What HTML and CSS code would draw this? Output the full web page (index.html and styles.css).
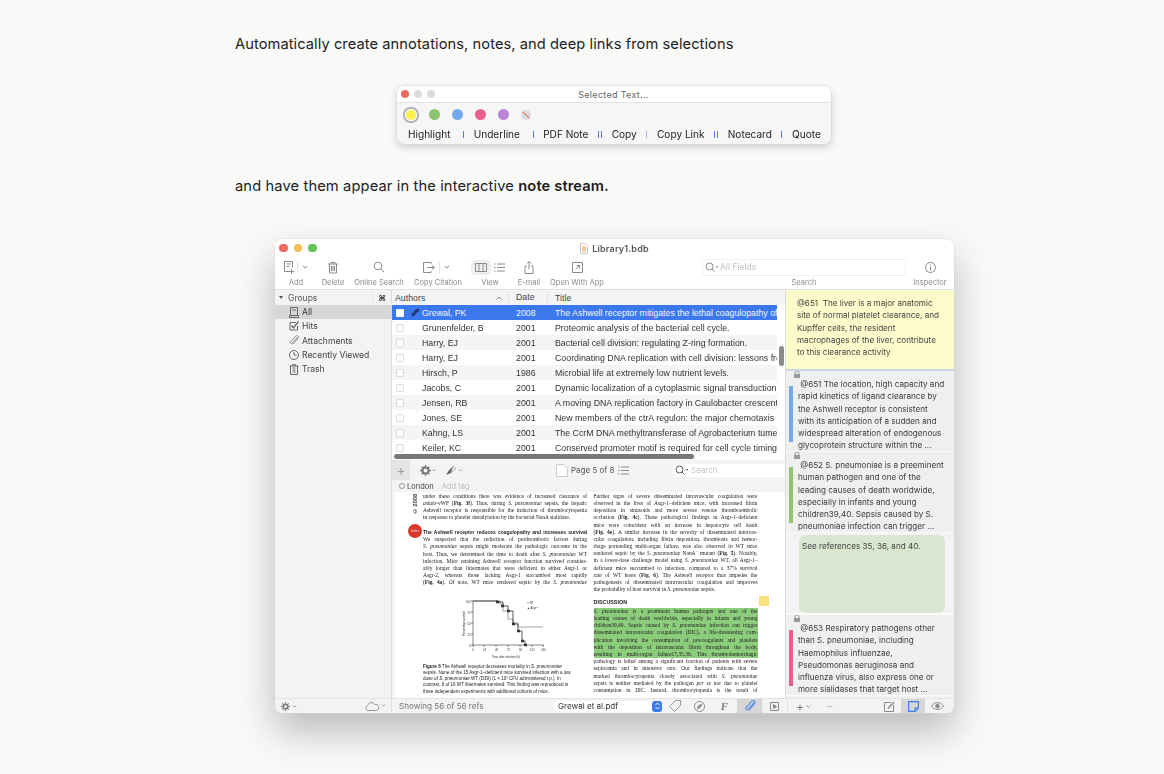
FILE: index.html
```html
<!DOCTYPE html>
<html lang="en">
<head>
<meta charset="utf-8">
<title>Bookends note stream</title>
<link rel="stylesheet" href="styles.css">
</head>
<body>
<main class="page">
  <p class="lead">Automatically create annotations, notes, and deep links from selections</p>

  <section class="popup">
    <header class="popup-title">
      <span class="lights"><i class="light red"></i><i class="light off"></i><i class="light off"></i></span>
      <span class="popup-name">Selected Text...</span>
    </header>
    <div class="swatches">
      <i class="swatch yellow"></i><i class="swatch green"></i><i class="swatch blue"></i><i class="swatch pink"></i><i class="swatch purple"></i>
      <svg class="swatch-none" width="10" height="10" viewBox="0 0 10 10"><circle cx="5" cy="5" r="5" fill="#dcdcdc"/><path d="M1.5 2 8.5 8" stroke="#e8553f" stroke-width="1"/></svg>
    </div>
    <div class="actions">
      <span>Highlight</span><b class="sep"></b><span>Underline</span><b class="sep"></b><span>PDF Note</span><b class="sep dbl"></b><span>Copy</span><b class="sep pale"></b><span>Copy Link</span><b class="sep dbl"></b><span>Notecard</span><b class="sep"></b><span>Quote</span>
    </div>
  </section>

  <p class="lead second">and have them appear in the interactive <strong>note stream.</strong></p>

  <section class="window">
    <header class="titlebar">
      <span class="lights big"><i class="light red"></i><i class="light amber"></i><i class="light lime"></i></span>
      <span class="doc-name">
        <svg width="8" height="11" viewBox="0 0 8 11"><path d="M.5.5h5l2 2v8H.5z" fill="#fff" stroke="#ccc"/><path d="M2 4h4M2 6h4M2 8h4" stroke="#ec9a3c"/></svg>
        Library1.bdb
      </span>
      <span></span>
    </header>

    <div class="toolbar">
      <div class="tool w42"><div class="ticon">
        <svg width="26" height="14" viewBox="0 0 26 14" fill="none"><path d="M1.500 1.500h8v6M1.500 1.500v10h5"/><path d="M3.500 4h4M3.500 6.500h3M8.500 9v5M6 11.500h5"/><path class="faint" d="M14.500 1v11"/><path d="m20 6 2 2 2-2"/></svg></div><span>Add</span></div>
      <div class="tool w32"><div class="ticon">
        <svg width="12" height="13" viewBox="0 0 12 13" fill="none"><path d="M1 3h10M4 3V1.500h4V3M2.500 3v9h7V3M4.500 5v5M6 5v5M7.500 5v5"/></svg></div><span>Delete</span></div>
      <div class="tool w60"><div class="ticon">
        <svg width="12" height="12" viewBox="0 0 12 12" fill="none"><circle cx="5" cy="5" r="3.800"/><path d="m8 8 3 3"/></svg></div><span>Online Search</span></div>
      <div class="tool w58"><div class="ticon">
        <svg width="32" height="13" viewBox="0 0 32 13" fill="none"><path d="M9 3V1.500H1.500v10H9V10M5 6.500h7M10 4.500l2.500 2-2.500 2"/><path class="faint" d="M17.500 1v11"/><path d="m23 5 2 2 2-2"/></svg></div><span>Copy Citation</span></div>
      <div class="tool w46"><div class="ticon view">
        <svg class="on" width="20" height="15" viewBox="0 0 20 15" fill="none"><path d="M4.500 3.500h11v8h-11zM8 3.500v8M12 3.500v8"/></svg>
        <svg width="11" height="9" viewBox="0 0 11 9" fill="none"><path d="M0 1h1.500M3 1h8M0 4.500h1.500M3 4.500h8M0 8h1.500M3 8h8"/></svg></div><span>View</span></div>
      <div class="tool w32"><div class="ticon">
        <svg width="10" height="13" viewBox="0 0 10 13" fill="none"><path d="M3 5H1v7.500h8V5H7M5 8.500V.5M3 2.500l2-2 2 2"/></svg></div><span>E-mail</span></div>
      <div class="tool w64"><div class="ticon">
        <svg width="11" height="11" viewBox="0 0 11 11" fill="none"><path d="M.5.5h10v10H.5zM3.500 7.500l4-4M4.500 3.500h3v3"/></svg></div><span>Open With App</span></div>
      <div class="tool search-tool"><div class="ticon"><div class="allfields">
        <svg width="14" height="10" viewBox="0 0 14 10" fill="none"><circle cx="4.500" cy="4.500" r="3.500"/><path d="m7 7 2.500 2.500M10.500 4l1.300 1.300L13 4"/></svg>
        <span>All Fields</span></div></div><span>Search</span></div>
      <div class="tool w48"><div class="ticon">
        <svg width="11" height="11" viewBox="0 0 11 11" fill="none"><circle cx="5.500" cy="5.500" r="5"/><path d="M5.500 4.500v4M5.500 2.500v1"/></svg></div><span>Inspector</span></div>
    </div>

    <div class="panes">
      <aside class="sidebar">
        <div class="group-head"><span class="disc"></span><span class="group-name">Groups</span><span class="cmd">⌘</span></div>
        <ul class="groups">
          <li class="active"><svg width="10" height="11" viewBox="0 0 10 11" fill="none" stroke="#666"><path d="M1.500.5h7v8h-7zM3 3h4M.5 8.500h9v2h-9z"/></svg>All</li>
          <li><svg width="10" height="10" viewBox="0 0 10 10" fill="none" stroke="#666"><path d="M8.500 5v4H1V1.500h6"/><path d="m2.500 4.500 2 2.500L9.500.5" stroke-width="1.300"/></svg>Hits</li>
          <li><svg width="10" height="11" viewBox="0 0 10 11" fill="none" stroke="#888"><path d="M8.500 2.500 3.200 8.300c-.9 1-2.500-.3-1.600-1.400L6.700 1.200c1.500-1.500 3.700.5 2.300 2.100L3.800 9.200"/></svg>Attachments</li>
          <li><svg width="10" height="10" viewBox="0 0 10 10" fill="none" stroke="#666"><circle cx="5" cy="5" r="4.500"/><path d="M5 2v3h2.500"/></svg>Recently Viewed</li>
          <li><svg width="10" height="11" viewBox="0 0 10 11" fill="none" stroke="#666"><path d="M.5 2h9M3.500 2V.7h3V2M1.500 2v8.500h7V2M3.500 4h3M3.500 6h3M3.500 8h3"/></svg>Trash</li>
        </ul>
      </aside>

      <section class="center">
        <div class="list">
          <div class="list-head">
            <span class="h-authors">Authors<svg width="6" height="4" viewBox="0 0 6 4" fill="none" stroke="#888"><path d="m.5 3.500L3 1l2.500 2.500"/></svg></span>
            <span class="h-date">Date</span>
            <span class="h-title">Title</span>
          </div>
          <div class="row selected"><i class="check"></i><svg class="clip" width="8" height="8" viewBox="0 0 10 10" fill="none" stroke="#16294f" stroke-width="1.500"><path d="M8.500 2 3.200 7.800c-.9 1-2.500-.3-1.600-1.400L6.700.8c1.500-1.500 3.700.5 2.300 2.100"/></svg><span>Grewal, PK</span><span>2008</span><span>The Ashwell receptor mitigates the lethal coagulopathy of sepsis</span></div>
          <div class="row"><i class="check"></i><span>Grunenfelder, B</span><span>2001</span><span>Proteomic analysis of the bacterial cell cycle.</span></div>
          <div class="row alt"><i class="check"></i><span>Harry, EJ</span><span>2001</span><span>Bacterial cell division: regulating Z-ring formation.</span></div>
          <div class="row"><i class="check"></i><span>Harry, EJ</span><span>2001</span><span>Coordinating DNA replication with cell division: lessons from</span></div>
          <div class="row alt"><i class="check"></i><span>Hirsch, P</span><span>1986</span><span>Microbial life at extremely low nutrient levels.</span></div>
          <div class="row"><i class="check"></i><span>Jacobs, C</span><span>2001</span><span>Dynamic localization of a cytoplasmic signal transduction response</span></div>
          <div class="row alt"><i class="check"></i><span>Jensen, RB</span><span>2001</span><span>A moving DNA replication factory in Caulobacter crescentus</span></div>
          <div class="row"><i class="check"></i><span>Jones, SE</span><span>2001</span><span>New members of the ctrA regulon: the major chemotaxis operon</span></div>
          <div class="row alt"><i class="check"></i><span>Kahng, LS</span><span>2001</span><span>The CcrM DNA methyltransferase of Agrobacterium tumefaciens</span></div>
          <div class="row"><i class="check"></i><span>Keiler, KC</span><span>2001</span><span>Conserved promoter motif is required for cell cycle timing</span></div>
          <i class="vscroll"></i>
          <i class="hscroll"></i>
        </div>

        <div class="pdf-bar">
          <span class="plus">+</span>
          <svg class="gear" width="17" height="11" viewBox="0 0 17 11" fill="none" stroke="#777"><circle cx="5.500" cy="5.500" r="3" stroke-width="2"/><path d="M5.500 0v2M5.500 9v2M0 5.500h2M9 5.500h2M1.700 1.700l1.400 1.400M7.900 7.900l1.400 1.400M1.700 9.300l1.400-1.400M7.900 3.100l1.400-1.400" stroke-width="1.300"/><path d="m12.500 4.500 1.500 1.500 1.500-1.500" stroke="#999"/></svg>
          <svg class="marker" width="19" height="11" viewBox="0 0 19 11" fill="none"><path d="m1 10 2.500-4L8 1l3 2.500L6 8z" fill="#666"/><path d="m8 1 3 2.500L6 8" stroke="#bbb" fill="#eee"/><path d="m14 4.500 1.500 1.500 1.500-1.500" stroke="#999"/></svg>
          <span class="page-num">
            <svg width="12" height="13" viewBox="0 0 12 13" fill="#fff" stroke="#ccc"><path d="M.5.5h7l4 4v8H.5z"/></svg>
            Page 5 of 8
            <svg width="11" height="9" viewBox="0 0 11 9" fill="none" stroke="#888"><path d="M0 1h1.500M3 1h8M0 4.500h1.500M3 4.500h8M0 8h1.500M3 8h8"/></svg>
          </span>
          <span class="pdf-search">
            <svg width="14" height="10" viewBox="0 0 14 10" fill="none" stroke="#555"><circle cx="4.500" cy="4.500" r="3.500"/><path d="m7 7 2.500 2.500M10.500 4l1.300 1.300L13 4"/></svg>
            Search
          </span>
        </div>
        <div class="tagbar"><i class="tag-dot"></i><span>London</span><span class="add-tag">Add tag</span></div>

        <div class="pdf">
          <span class="rail">© 2008 N</span>
          <span class="badge">letter</span>
          <i class="pin"></i>
          <div class="col left-col">
            <p class="ln">under these conditions there was evidence of increased clearance of</p>
            <p class="ln"><em>asialo</em>-vWF (<b>Fig. 3f</b>). Thus, during <em>S. pneumoniae</em> sepsis, the hepatic</p>
            <p class="ln">Ashwell receptor is responsible for the induction of thrombocytopenia</p>
            <p class="ln last">in response to platelet desialylation by the bacterial NanA sialidase.</p>
            <p class="ln heading">The Ashwell receptor reduces coagulopathy and increases survival</p>
            <p class="ln">We suspected that the reduction of prothrombotic factors during</p>
            <p class="ln"><em>S. pneumoniae</em> sepsis might moderate the pathologic outcome in the</p>
            <p class="ln">host. Thus, we determined the time to death after <em>S. pneumoniae</em> WT</p>
            <p class="ln">infection. Mice retaining Ashwell receptor function survived consider-</p>
            <p class="ln">ably longer than littermates that were deficient in either Asgr-1 or</p>
            <p class="ln">Asgr-2, whereas those lacking Asgr-1 succumbed most rapidly</p>
            <p class="ln">(<b>Fig. 4a</b>). Of note, WT mice rendered septic by the <em>S. pneumoniae</em></p>
            <svg class="chart" width="82" height="60" viewBox="0 0 82 60" fill="none" stroke="#333" stroke-width=".6">
              <path d="M9 1v44h71M7 1h2M7 12h2M7 23h2M7 34h2M7 45h2M9 45v2M20 45v2M32 45v2M44 45v2M56 45v2M68 45v2M79 45v2"/>
              <path d="M9 1h27v3h3v7h5v8h5v4h5v4h25" stroke="#666"/>
              <path d="M9 1h25v1h5v4h5v5h5v13h5v7h4v10h3v4" stroke-width=".8"/>
              <path d="M32 2h3M37 6h3M43 11h3M48 24h3M53 31h3M57 41h3M60 45h3" stroke-width="2.500"/>
              <g class="chart-t" stroke="none" fill="#333">
                <text x="63" y="3.500">□ WT</text>
                <text x="63" y="8.500">▲ Asgr⁻¹⁻</text>
                <text x="28" y="57.500">Time after infection (h)</text>
                <text x="8" y="51">0</text><text x="19" y="51">24</text><text x="31" y="51">48</text><text x="43" y="51">72</text><text x="55" y="51">96</text><text x="66" y="51">120</text><text x="77" y="51">240</text>
                <text x="2" y="2.500">100</text><text x="3.500" y="13.500">75</text><text x="3.500" y="24.500">50</text><text x="3.500" y="35.500">25</text><text x="5" y="46.500">0</text>
                <text transform="translate(1 36) rotate(-90)">Percentage survival</text>
              </g>
            </svg>
            <p class="cap"><b>Figure 6</b> The Ashwell receptor decreases mortality in <em>S. pneumoniae</em></p>
            <p class="cap">sepsis. None of the 15 Asgr-1–deficient mice survived infection with a low</p>
            <p class="cap">dose of <em>S. pneumoniae</em> WT (D39) (1 × 10³ CFU administered i.p.). In</p>
            <p class="cap">contrast, 6 of 16 WT littermates survived. This finding was reproduced in</p>
            <p class="cap">three independent experiments with additional cohorts of mice.</p>
          </div>
          <div class="col right-col">
            <p class="ln">Further signs of severe disseminated intravascular coagulation were</p>
            <p class="ln">observed in the liver of Asgr-1–deficient mice, with increased fibrin</p>
            <p class="ln">deposition in sinusoids and more severe venous thromboembolic</p>
            <p class="ln">occlusion (<b>Fig. 4c</b>). These pathological findings in Asgr-1–deficient</p>
            <p class="ln">mice were coincident with an increase in hepatocyte cell death</p>
            <p class="ln">(<b>Fig. 4e</b>). A similar increase in the severity of disseminated intravas-</p>
            <p class="ln">cular coagulation, including fibrin deposition, thrombosis and hemor-</p>
            <p class="ln">rhage portending multi-organ failure, was also observed in WT mice</p>
            <p class="ln">rendered septic by the <em>S. pneumoniae</em> NanA⁻ mutant (<b>Fig. 5</b>). Notably,</p>
            <p class="ln">in a lower-dose challenge model using <em>S. pneumoniae</em> WT, all Asgr-1–</p>
            <p class="ln">deficient mice succumbed to infection, compared to a 37% survival</p>
            <p class="ln">rate of WT hosts (<b>Fig. 6</b>). The Ashwell receptor thus impedes the</p>
            <p class="ln">pathogenesis of disseminated intravascular coagulation and improves</p>
            <p class="ln last">the probability of host survival in <em>S. pneumoniae</em> sepsis.</p>
            <p class="disc-head">DISCUSSION</p>
            <div class="hl">
              <p class="ln"><em>S. pneumoniae</em> is a prominent human pathogen and one of the</p>
              <p class="ln">leading causes of death worldwide, especially in infants and young</p>
              <p class="ln">children39,40. Sepsis caused by <em>S. pneumoniae</em> infection can trigger</p>
              <p class="ln">disseminated intravascular coagulation (DIC), a life-threatening com-</p>
              <p class="ln">plication involving the consumption of procoagulants and platelets</p>
              <p class="ln">with the deposition of intravascular fibrin throughout the body,</p>
              <p class="ln">resulting in multi-organ failure17,35,36. This thrombohemorrhagic</p>
            </div>
            <p class="ln">pathology is lethal among a significant fraction of patients with severe</p>
            <p class="ln">septicemia and in intensive care. Our findings indicate that the</p>
            <p class="ln">marked thrombocytopenia closely associated with <em>S. pneumoniae</em></p>
            <p class="ln">sepsis is neither mediated by the pathogen <em>per se</em> nor due to platelet</p>
            <p class="ln">consumption in DIC. Instead, thrombocytopenia is the result of</p>
          </div>
        </div>
      </section>

      <aside class="stream">
        <div class="note-main">@651&nbsp; The liver is a major anatomic<br>site of normal platelet clearance, and<br>Kupffer cells, the resident<br>macrophages of the liver, contribute<br>to this clearance activity</div>
        <article class="card">
          <svg class="lock" width="6" height="7" viewBox="0 0 6 7"><path d="M1 3V2a2 2 0 0 1 4 0v1" fill="none" stroke="#999"/><rect y="3" width="6" height="4" fill="#999"/></svg>
          <div class="card-body"><i class="bar c-blue"></i><p>&nbsp;@651 The location, high capacity and<br>rapid kinetics of ligand clearance by<br>the Ashwell receptor is consistent<br>with its anticipation of a sudden and<br>widespread alteration of endogenous<br>glycoprotein structure within the ...</p></div>
        </article>
        <article class="card">
          <svg class="lock" width="6" height="7" viewBox="0 0 6 7"><path d="M1 3V2a2 2 0 0 1 4 0v1" fill="none" stroke="#999"/><rect y="3" width="6" height="4" fill="#999"/></svg>
          <div class="card-body"><i class="bar c-green"></i><p>&nbsp;@652 S. pneumoniae is a preeminent<br>human pathogen and one of the<br>leading causes of death worldwide,<br>especially in infants and young<br>children39,40. Sepsis caused by S.<br>pneumoniae infection can trigger ...</p></div>
        </article>
        <div class="comment-wrap"><div class="comment">See references 35, 36, and 40.</div></div>
        <article class="card">
          <svg class="lock" width="6" height="7" viewBox="0 0 6 7"><path d="M1 3V2a2 2 0 0 1 4 0v1" fill="none" stroke="#999"/><rect y="3" width="6" height="4" fill="#999"/></svg>
          <div class="card-body"><i class="bar c-pink"></i><p>&nbsp;@653 Respiratory pathogens other<br>than S. pneumoniae, including<br>Haemophilus influenzae,<br>Pseudomonas aeruginosa and<br>influenza virus, also express one or<br>more sialidases that target host ...</p></div>
        </article>
      </aside>
    </div>

    <footer class="statusbar">
      <div class="st-left">
        <svg width="17" height="9" viewBox="0 0 17 9" fill="none" stroke="#777"><circle cx="4.500" cy="4.500" r="2.300" stroke-width="1.600"/><path d="M4.500 0v1.500M4.500 7.500V9M0 4.500h1.500M7.500 4.500H9M1.300 1.300l1 1M6.700 6.700l1 1M1.300 7.700l1-1M6.700 2.300l1-1" stroke-width="1.100"/><path d="m12 3.500 1.500 1.500L15 3.500" stroke="#999"/></svg>
        <svg width="22" height="10" viewBox="0 0 22 10" fill="none" stroke="#999"><path d="M3 9.500A2.500 2.500 0 0 1 2.500 4.700 4 4 0 0 1 9.800 3.500 3 3 0 0 1 11.500 9.500z"/><path d="m17 3.500 1.500 1.500L20 3.500"/></svg>
      </div>
      <div class="st-mid">
        <span class="refs">Showing 56 of 56 refs</span>
        <span class="select">Grewal et al.pdf<i class="stepper"><svg width="5" height="8" viewBox="0 0 5 8" fill="none" stroke="#fff"><path d="m.5 3 2-2 2 2M.5 5l2 2 2-2"/></svg></i></span>
        <span class="cell"><svg width="12" height="12" viewBox="0 0 12 12" fill="none" stroke="#999"><path d="M6.500.5h5v5l-6 6-5-5zM9 3v.1"/></svg></span>
        <span class="cell"><svg width="11" height="11" viewBox="0 0 11 11" fill="none" stroke="#888"><circle cx="5.500" cy="5.500" r="5"/><path d="M7.800 3.200 4.700 4.700 3.200 7.800l3.100-1.500z" fill="#888"/></svg></span>
        <span class="cell serif-f">F</span>
        <span class="cell on"><svg width="12" height="12" viewBox="0 0 12 12" fill="none" stroke="#5b8fe6" stroke-width="1.100"><path d="M10 2.500 4 9.300c-1 1.200-3-.3-1.900-1.600L8 1c1.700-1.700 4.200.5 2.700 2.400L4.800 10.500"/></svg></span>
        <span class="cell"><svg width="9" height="9" viewBox="0 0 9 9" fill="none" stroke="#888"><path d="M.5.5h8v8h-8z"/><path d="m3.500 2.500 3 2-3 2z" fill="#888"/></svg></span>
      </div>
      <div class="st-right">
        <span class="plusminus">+<svg width="5" height="3" viewBox="0 0 5 3" fill="none" stroke="#999"><path d="m.5.5 2 2 2-2"/></svg></span>
        <span class="minus">−</span>
        <span class="cell2"><svg width="11" height="11" viewBox="0 0 11 11" fill="none" stroke="#888"><path d="M7 1.500H.5v9h9V4"/><path d="M4 7.500 10 1" stroke-width="1.300"/></svg></span>
        <span class="cell2 on"><svg width="11" height="11" viewBox="0 0 11 11" fill="none" stroke="#3f7fe8" stroke-width="1.200"><path d="M.6.6h9.800v6.500l-3.300 3.300H.6zM10.400 7H7v3.400"/></svg></span>
        <span class="cell2"><svg width="13" height="8" viewBox="0 0 13 8" fill="none" stroke="#888"><path d="M.5 4c3-4.600 9-4.600 12 0-3 4.600-9 4.600-12 0z"/><circle cx="6.500" cy="4" r="1.800" fill="#888"/></svg></span>
      </div>
    </footer>
  </section>
</main>
</body>
</html>
```

FILE: styles.css
```css
* { box-sizing: border-box; }
html, body { margin: 0; height: 100%; }
body {
  background: #f9f9f7;
  color: #222;
  font-family: Inter, "Liberation Sans", sans-serif;
  overflow: hidden;
}
p { margin: 0; }
ul { margin: 0; padding: 0; list-style: none; }
i { display: block; }

.page { padding: 34px 0 0 235px; }
.lead { font-size: 14.650px; line-height: 20px; color: #1d1d1d; letter-spacing: .08px; }
.lead strong { font-weight: 600; }
.second { margin-top: 32px; letter-spacing: .14px; }

/* popup */
.popup {
  width: 434px;
  height: 58px;
  margin: 32px 0 0 162px;
  background: #f6f6f6;
  border-radius: 7px;
  box-shadow: 0 0 0 .5px #d6d6d6, 0 3px 8px rgba(0,0,0,.18);
  filter: blur(.3px);
}
.popup-title {
  display: flex;
  height: 17px;
  align-items: center;
  background: #fff;
  border-bottom: 1px solid #e2e2e2;
  border-radius: 7px 7px 0 0;
  padding-left: 4px;
}
.lights { display: flex; gap: 5px; }
.light { width: 8px; height: 8px; border-radius: 50%; }
.light.red { background: #ee6a5f; }
.light.off { background: #dcdcdc; }
.light.amber { background: #f5bd4f; }
.light.lime { background: #61c454; }
.popup-name {
  flex: 1;
  text-align: center;
  font-size: 9px;
  color: #666;
  letter-spacing: .3px;
  padding-right: 39px;
}
.swatches { display: flex; align-items: center; height: 23px; padding-left: 6.500px; }
.swatch { width: 11px; height: 11px; border-radius: 50%; margin-right: 12px; }
.swatch.yellow { width: 10px; height: 10px; margin: 0 13px 0 2px; background: #fbf24a; box-shadow: 0 0 0 1.500px #f6f6f6, 0 0 0 3px #a5a5a5; }
.green { background: #8cc46f; }
.blue { background: #74a9ea; }
.pink { background: #e8618a; }
.purple { background: #b985d6; }
.actions {
  display: flex;
  align-items: center;
  justify-content: space-between;
  padding: 0 10px 0 11px;
  height: 16px;
  font-size: 10.100px;
  color: #222;
}
.actions span:nth-of-type(-n+2) { margin-right: 3px; }
.sep { width: 1px; height: 7px; background: #5678e0; }
.sep.dbl { width: 4px; background: none; border-left: 1px solid #5678e0; border-right: 1px solid #5678e0; }
.sep.pale { background: #9db0ea; }

/* window */
.window {
  display: flex;
  flex-direction: column;
  width: 679px;
  height: 474px;
  margin: 43px 0 0 40px;
  background: #f4f4f4;
  border-radius: 8px;
  overflow: hidden;
  box-shadow: 0 0 0 .5px #d6d6d6, 0 18px 38px rgba(0,0,0,.26);
  filter: blur(.45px);
}
.titlebar {
  display: grid;
  grid-template-columns: 1fr auto 1fr;
  align-items: center;
  height: 18px;
  padding: 0 4px;
  background: #fff;
}
.lights.big { gap: 6px; }
.lights.big .light { width: 8.500px; height: 8.500px; }
.doc-name { display: flex; align-items: center; gap: 4px; font-size: 9px; font-weight: 600; color: #555; letter-spacing: .2px; }

.toolbar { display: flex; height: 32px; background: #fff; }
.toolbar svg { stroke: #8c8c8c; }
.toolbar .faint { stroke: #e2e2e2; }
.tool { display: flex; flex-direction: column; align-items: center; font-size: 7.500px; color: #8a8a8a; line-height: 11px; }
.ticon { display: flex; align-items: center; justify-content: center; gap: 3px; height: 20px; }
.w32 { width: 32px; } .w42 { width: 42px; } .w46 { width: 46px; }
.w48 { width: 48px; } .w58 { width: 58px; } .w60 { width: 60px; } .w64 { width: 64px; }
.search-tool { width: 204px; margin-left: 93px; }
.view { margin-right: 4px; }
.view .on { background: #efefef; border-radius: 4px; }
.allfields {
  display: flex; align-items: center; gap: 1px;
  width: 204px; height: 17px; padding-left: 2px;
  border: 1px solid #f1f1f1; border-radius: 3px;
  font-size: 8.500px; color: #c4c4c4;
}

.panes { display: flex; height: 409px; border-top: 1px solid #e0e0e0; }
.sidebar { width: 117px; background: #f3f3f3; border-right: 1px solid #dcdcdc; flex: none; }
.group-head { display: flex; align-items: center; height: 15px; padding: 0 5px 0 4px; font-size: 8.550px; color: #555; }
.disc { width: 0; height: 0; border: 2px solid transparent; border-top: 3px solid #555; border-bottom: 0; margin-right: 5px; }
.group-name { flex: 1; }
.cmd { font-size: 8px; color: #333; padding-left: 5px; border-left: 1px solid #e4e4e4; font-weight: 600; }
.groups li { display: flex; align-items: center; gap: 3px; height: 14.300px; padding-left: 14px; font-size: 8.550px; color: #444; }
.groups svg { flex: none; width: 10px; }
.groups .active { background: #d6d6d6; color: #333; }

.center { width: 393px; flex: none; display: flex; flex-direction: column; }
.list { position: relative; height: 170px; background: #fff; overflow: hidden; padding-right: 8px; }
.list-head { display: grid; grid-template-columns: 114px 39px 1fr; height: 15px; align-items: center; padding-left: 3px; background: #f4f4f4; font-family: "Liberation Sans", sans-serif; font-size: 8.800px; color: #444; margin-right: -8px; }
.h-authors { display: flex; align-items: center; justify-content: space-between; padding-right: 6px; height: 11px; border-right: 1px solid #e4e4e4; }
.h-date { padding-left: 7px; height: 11px; line-height: 11px; border-right: 1px solid #e4e4e4; }
.h-title { padding-left: 7px; }
.row {
  position: relative;
  display: grid;
  grid-template-columns: 30px 94px 39px 1fr;
  height: 15px;
  align-items: center;
  font-family: "Liberation Sans", sans-serif;
  font-size: 8.800px;
  color: #333;
  white-space: nowrap;
  overflow: hidden;
}
.row span { overflow: hidden; }
.alt { background: #f5f5f5; }
.check { width: 8px; height: 8px; margin-left: 4px; background: #fff; border: 1px solid #ddd; border-radius: 1px; }
.selected { background: #3b78ee; color: #f2f6ff; }
.selected .check { border-color: #fff; }
.clip { position: absolute; left: 19px; top: 4px; }
.vscroll { position: absolute; right: 1px; top: 56px; width: 5px; height: 20px; border-radius: 3px; background: #8b8b8b; }
.hscroll { position: absolute; left: 2px; bottom: 1px; width: 300px; height: 5px; border-radius: 3px; background: #777; }

.pdf-bar { display: flex; align-items: center; height: 20px; background: #f4f4f4; font-size: 8px; color: #555; }
.plus { width: 18px; height: 20px; text-align: center; font-size: 14px; line-height: 19px; font-weight: 300; background: #e4e4e4; color: #888; }
.gear { margin-left: 10px; }
.marker { margin-left: 8px; }
.page-num { display: flex; align-items: center; gap: 3px; margin-left: 92px; width: 111px; }
.pdf-search { display: flex; align-items: center; gap: 2px; margin-left: 6px; flex: 1; height: 13px; padding-left: 2px; background: #fff; border-radius: 5px 0 0 5px; color: #c8c8c8; }
.tagbar { display: flex; align-items: center; height: 12px; padding-left: 7px; background: #f4f4f4; font-size: 7.500px; color: #444; }
.tag-dot { width: 6px; height: 6px; border: 1px solid #999; border-radius: 50%; margin-right: 2px; }
.add-tag { margin-left: 8px; color: #bbb; }

.pdf { position: relative; flex: 1; display: flex; overflow: hidden; background: #fff; margin-left: 3px; padding: .8px 0 0 28px; gap: 6.500px; min-height: 0; }
.col { width: 164px; flex: none; font-family: "Liberation Serif", serif; font-size: 5.450px; line-height: 7.180px; color: #222; }
.ln { text-align: justify; text-align-last: justify; }
.ln.last { text-align-last: left; }
.heading { margin-top: 7.500px; font-family: "Liberation Sans", sans-serif; font-weight: 700; font-size: 4.950px; }
.chart { display: block; margin: 13px 0 4px 41px; overflow: visible; }
.chart-t { font-family: "Liberation Sans", sans-serif; font-size: 2.800px; }
.cap { font-family: "Liberation Sans", sans-serif; font-size: 4.550px; line-height: 6.300px; white-space: nowrap; }
.disc-head { margin-top: 5.500px; font-family: "Liberation Sans", sans-serif; font-weight: 700; font-size: 5.400px; line-height: 7px; }
.hl { margin-top: 2px; background: #8ccd7c; }
.rail { position: absolute; left: 17px; top: -4px; font-size: 5.800px; font-weight: 700; color: #444; font-family: "Liberation Sans", sans-serif; writing-mode: vertical-rl; transform: rotate(180deg); white-space: nowrap; }
.badge { position: absolute; left: 13px; top: 32px; width: 14px; height: 14px; border-radius: 50%; background: #d8392c; color: #fde; font-size: 3.500px; line-height: 14px; text-align: center; font-family: "Liberation Sans", sans-serif; }
.pin { position: absolute; left: 364px; top: 104px; width: 10px; height: 10px; background: #f9e07c; }

.stream { flex: none; width: 169px; background: #f2f2f2; border-left: 1px solid #dcdcdc; font-size: 8.150px; line-height: 12.250px; color: #3a3a3a; display: flex; flex-direction: column; }
.note-main { height: 81px; padding: 7px 8px 0 11px; background: #fdfbcc; border-bottom: 2px solid #c9d9e6; color: #444; white-space: nowrap; }
.card { height: 81px; padding-left: 3px; background: #efefef; border-bottom: 1px solid #fafafa; flex: none; }
.lock { display: block; margin-left: 5px; height: 7px; }
.card-body { display: flex; }
.card-body p { margin-left: 5px; white-space: nowrap; }
.bar { flex: none; width: 4px; height: 56px; margin-top: 8px; }
.c-blue { background: #74a9ea; }
.c-green { background: #8cc46f; }
.c-pink { background: #e8618a; }
.comment-wrap { height: 82px; padding: 2px 9px 2px 13px; background: #f3f3f3; border-bottom: 2px solid #fafafa; flex: none; }
.comment { height: 78px; padding: 5px 3px; background: #d9e6d0; border-radius: 6px; color: #444; }

.statusbar { display: flex; height: 15px; flex: none; background: #f3f3f3; border-top: 1px solid #e4e4e4; color: #666; font-size: 8.100px; }
.st-left { display: flex; align-items: center; justify-content: space-between; width: 117px; padding: 0 4px 0 6px; border-right: 1px solid #e2e2e2; }
.st-mid { display: flex; align-items: center; width: 395px; flex: none; }
.refs { flex: 1; padding-left: 7px; color: #777; }
.select { display: flex; align-items: center; justify-content: space-between; width: 108px; height: 11px; padding-left: 4px; background: #fff; border-radius: 3px; color: #333; }
.stepper { display: flex; align-items: center; justify-content: center; width: 10px; height: 11px; background: #3b78ee; border-radius: 3px; }
.cell { display: flex; align-items: center; justify-content: center; width: 25px; height: 14px; }
.cell.on, .cell2.on { background: #d6d6d6; }
.serif-f { font-family: "Liberation Serif", serif; font-style: italic; font-weight: 700; font-size: 11px; color: #777; }
.st-right { display: flex; align-items: center; flex: 1; border-left: 1px solid #e2e2e2; }
.plusminus { display: flex; align-items: center; gap: 2px; margin-left: 8px; width: 24px; font-size: 12px; color: #777; }
.minus { width: 51px; margin-left: 6px; color: #bbb; font-size: 11px; }
.cell2 { display: flex; align-items: center; justify-content: center; width: 24px; height: 14px; }
```
